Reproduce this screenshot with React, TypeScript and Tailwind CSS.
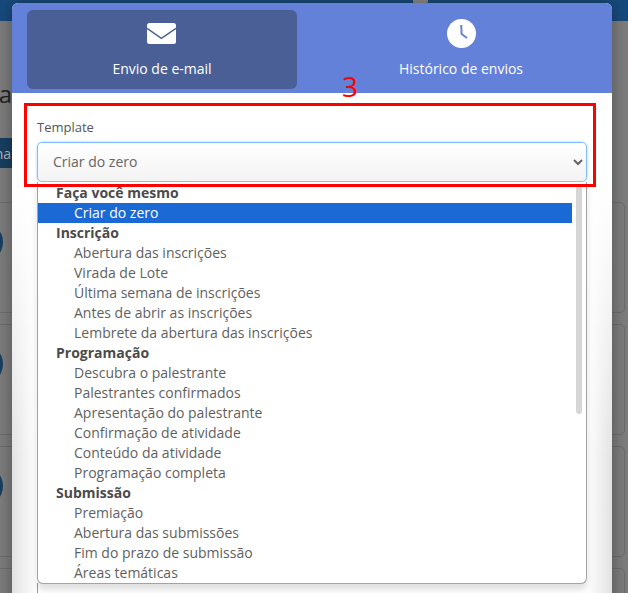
const groups = [
  { title: "Faça você mesmo", items: ["Criar do zero"] },
  {
    title: "Inscrição",
    items: [
      "Abertura das inscrições",
      "Virada de Lote",
      "Última semana de inscrições",
      "Antes de abrir as inscrições",
      "Lembrete da abertura das inscrições",
    ],
  },
  {
    title: "Programação",
    items: [
      "Descubra o palestrante",
      "Palestrantes confirmados",
      "Apresentação do palestrante",
      "Confirmação de atividade",
      "Conteúdo da atividade",
      "Programação completa",
    ],
  },
  {
    title: "Submissão",
    items: ["Premiação", "Abertura das submissões", "Fim do prazo de submissão", "Áreas temáticas"],
  },
];

function BackgroundCard() {
  return (
    <div className="h-[111px] w-[640px] shrink-0 rounded-[5px] border border-[#6c6c6c] pt-[19px]">
      <div className="ml-[-23px] h-[40px] w-[40px] rounded-full bg-[#173f60]" />
    </div>
  );
}

export default function App() {
  return (
    <div className="relative h-[593px] w-[628px] overflow-hidden bg-[#7c7c7c] font-['Open_Sans',sans-serif]">
      {/* page behind the modal */}
      <div className="h-[21px] overflow-hidden bg-[#174a7c] text-[14px] leading-[20px] text-[#9a9a9a]">
        <div className="ml-[413px] mt-[-16px] flex items-center whitespace-nowrap">
          <div className="h-[20px] w-[17px] rounded-[3px] bg-[#8a8a8a]" />
          <span className="ml-[15px]">Meus Eventos</span>
          <span className="ml-[44px]">Área do</span>
        </div>
      </div>
      <div className="ml-[-15px] pt-[58px]">
        <div className="flex w-[27px] justify-end whitespace-nowrap text-[24px] leading-[30px] text-[#222]">
          Mapa
        </div>
        <div className="mt-[29px] flex h-[30px] w-[60px] items-center justify-end bg-[#173f60] pr-[34px] text-[14px] text-[#bbb]">
          na
        </div>
        <div className="mt-[34px] flex flex-col gap-[11px]">
          <BackgroundCard />
          <BackgroundCard />
          <BackgroundCard />
          <BackgroundCard />
        </div>
      </div>

      {/* modal */}
      <div className="absolute left-[12px] top-[3px] h-[640px] w-[600px] overflow-hidden rounded-[6px] bg-white shadow-[0_0_16px_rgba(0,0,0,0.35)]">
        <div className="grid h-[90px] grid-cols-2 gap-[30px] bg-[#6381d8] px-[15px] pt-[7px]">
          <div className="flex h-[79px] flex-col items-center rounded-[6px] bg-[#4a5f96] pt-[13px] text-white">
            <svg viewBox="0 0 29 21" className="ml-[-1px] h-[21px] w-[29px]">
              <rect width="29" height="21" rx="2.5" fill="#fff" />
              <polyline points="0,5.3 14.4,15.3 29,5.3" fill="none" stroke="#4a5f96" strokeWidth="1.4" />
            </svg>
            <span className="mt-[15px] text-[14px] leading-[20px]">Envio de e-mail</span>
          </div>
          <div className="flex h-[79px] flex-col items-center rounded-[6px] pr-[2px] pt-[9px] text-white">
            <svg viewBox="0 0 29 29" className="h-[29px] w-[29px]">
              <circle cx="14.5" cy="14.5" r="14.5" fill="#fff" />
              <polyline points="14.2,6 14.6,15 20,19" fill="none" stroke="#6381d8" strokeWidth="2" />
            </svg>
            <span className="mt-[11px] text-[14px] leading-[20px]">Histórico de envios</span>
          </div>
        </div>

        <div className="relative h-[550px] px-[25px] pt-[24px]">
          <div className="absolute bottom-0 left-0 top-[94px] w-[25px] bg-gradient-to-r from-[#e2e2e2] to-white [mask-image:linear-gradient(to_bottom,transparent,black_60%)]" />
          <div className="absolute bottom-0 right-0 top-[94px] w-[25px] bg-gradient-to-l from-[#e2e2e2] to-white [mask-image:linear-gradient(to_bottom,transparent,black_60%)]" />
          <label className="relative block text-[13px] leading-[20px] text-[#555]">Template</label>
          <select className="relative mt-[5px] h-[40px] w-[550px] rounded-[5px] border border-[#80bdff] bg-gradient-to-b from-white to-[#f3f3f3] pb-[2px] pl-[11px] text-[14px] text-[#666] shadow-[0_0_3px_rgba(128,189,255,0.7)] outline-none">
            <option>Criar do zero</option>
          </select>
          <div className="absolute bottom-0 left-[25px] h-[60px] w-[1px] bg-[#999]" />
        </div>
      </div>

      {/* open select list */}
      <div className="absolute left-[37px] top-[182px] h-[402px] w-[550px] overflow-hidden rounded-b-[6px] border border-t-0 border-[#a3a3a3] bg-white text-[14px] leading-[20px] text-[#5f5f5f] shadow-[0_6px_6px_rgba(0,0,0,0.12)]">
        <div className="w-[534px] pt-px">
          {groups.map((group) => (
            <div key={group.title}>
              <div className="pl-[18px] font-bold text-[#4b4b4b]">{group.title}</div>
              {group.items.map((item) => (
                <div
                  key={item}
                  className={
                    item === "Criar do zero" ? "bg-[#1a69d4] pl-[36px] text-white" : "pl-[36px]"
                  }
                >
                  {item}
                </div>
              ))}
            </div>
          ))}
        </div>
        <div className="absolute left-[538px] top-[4px] h-[228px] w-[6px] rounded-[3px] bg-[#d6d6d6]" />
      </div>

      {/* annotation */}
      <div className="absolute left-[24px] top-[103px] h-[84px] w-[572px] border-[3px] border-[#f00]" />
      <span className="absolute left-[342px] top-[67px] text-[28px] leading-[38px] text-[#f00]">3</span>
    </div>
  );
}
